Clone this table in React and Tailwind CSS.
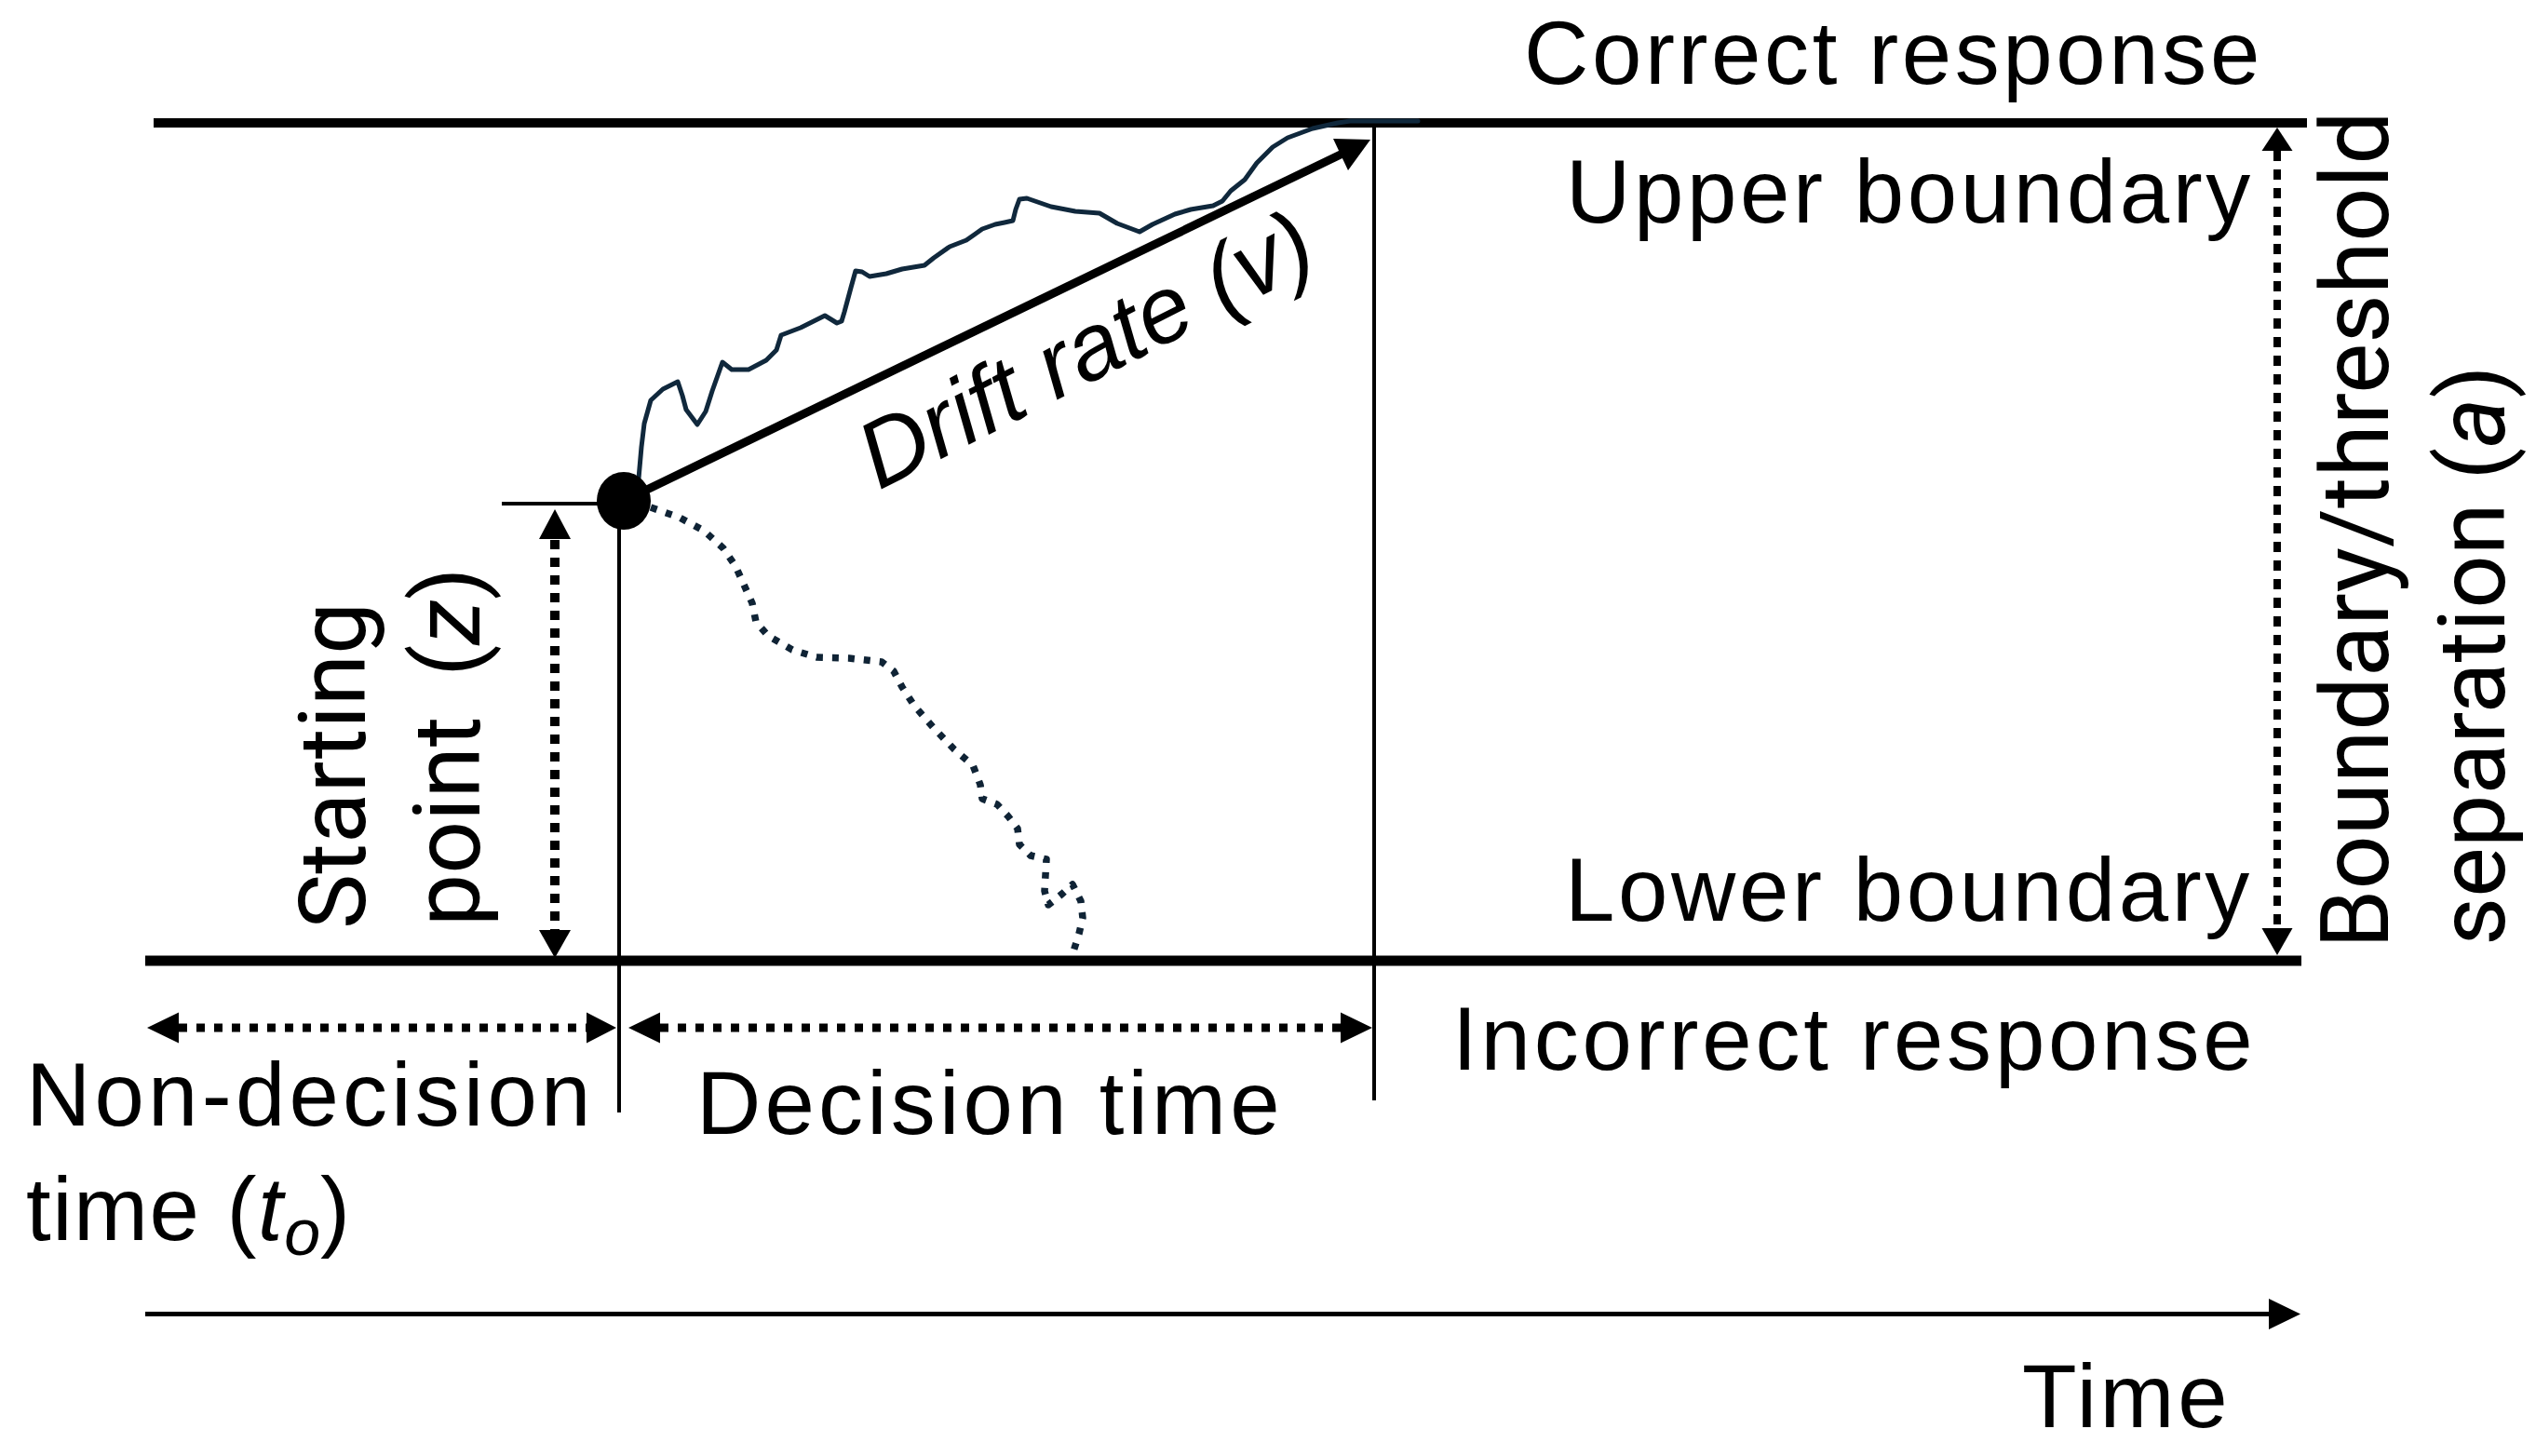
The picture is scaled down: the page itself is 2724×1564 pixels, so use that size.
import React from "react";

const noisy = [
  [686, 514], [689, 480], [692, 455], [699, 430], [712, 418], [728, 410], [733, 425], [737, 440],
  [749, 456], [758, 442], [765, 420], [776, 389], [786, 397], [804, 397], [823, 387], [834, 376],
  [839, 360], [860, 352], [886, 339], [899, 347], [904, 345], [907, 335], [914, 309], [919, 291],
  [926, 292], [934, 297], [952, 294], [969, 289], [993, 285], [1003, 277], [1020, 265], [1038, 258],
  [1048, 251], [1055, 246], [1069, 241], [1079, 239], [1088, 237], [1091, 225], [1095, 214],
  [1103, 213], [1129, 222], [1155, 227], [1181, 229], [1200, 240], [1224, 249], [1238, 241],
  [1262, 230], [1279, 225], [1303, 221], [1313, 216], [1322, 205], [1337, 193], [1350, 175],
  [1367, 158], [1383, 148], [1410, 138], [1437, 132], [1450, 130], [1523, 130],
];

const dotted = [
  [699, 545], [730, 556], [756, 570], [777, 589], [790, 608], [799, 628], [808, 648], [812, 668],
  [825, 683], [851, 698], [877, 706], [912, 707], [947, 711], [960, 721], [969, 738], [982, 758],
  [1003, 782], [1025, 805], [1045, 822], [1053, 843], [1055, 858], [1071, 864], [1083, 877],
  [1093, 890], [1095, 907], [1107, 919], [1124, 923], [1123, 940], [1122, 957], [1126, 972],
  [1141, 960], [1152, 950], [1161, 968], [1163, 986], [1159, 1003], [1153, 1022],
];

const toPath = (pts) => pts.map((p, i) => `${i ? "L" : "M"}${p[0]} ${p[1]}`).join(" ");

function Diagram() {
  return (
    <svg
      className="absolute inset-0"
      width="2724"
      height="1564"
      viewBox="0 0 2724 1564"
      xmlns="http://www.w3.org/2000/svg"
    >
      {/* boundaries */}
      <line x1="165" y1="132" x2="2478" y2="132" stroke="#000" strokeWidth="10" />
      <line x1="156" y1="1032" x2="2472" y2="1032" stroke="#000" strokeWidth="11" />

      {/* time axis */}
      <line x1="156" y1="1411.5" x2="2440" y2="1411.5" stroke="#000" strokeWidth="5" />
      <polygon points="2471,1411.5 2437,1395 2437,1428" fill="#000" />

      {/* vertical markers */}
      <line x1="665" y1="540" x2="665" y2="1195" stroke="#000" strokeWidth="4" />
      <line x1="1476" y1="132" x2="1476" y2="1182" stroke="#000" strokeWidth="4" />
      <line x1="539" y1="541" x2="660" y2="541" stroke="#000" strokeWidth="4" />

      {/* starting point dotted arrow */}
      <line x1="596" y1="580" x2="596" y2="1000" stroke="#000" strokeWidth="10" strokeDasharray="10 9" />
      <polygon points="596,547 579,579 613,579" fill="#000" />
      <polygon points="596,1029 579,999 613,999" fill="#000" />

      {/* boundary separation dotted arrow */}
      <line x1="2446" y1="162" x2="2446" y2="997" stroke="#000" strokeWidth="8" strokeDasharray="11 9" />
      <polygon points="2446,137 2429.5,162 2462.5,162" fill="#000" />
      <polygon points="2446,1026 2429.5,997 2462.5,997" fill="#000" />

      {/* non-decision / decision dotted arrows */}
      <line x1="192" y1="1104" x2="631" y2="1104" stroke="#000" strokeWidth="9" strokeDasharray="9 10" />
      <polygon points="158,1104 192,1087.5 192,1120.5" fill="#000" />
      <polygon points="662,1104 630,1087.5 630,1120.5" fill="#000" />
      <line x1="709" y1="1104" x2="1440" y2="1104" stroke="#000" strokeWidth="9" strokeDasharray="9 10" />
      <polygon points="675,1104 709,1087.5 709,1120.5" fill="#000" />
      <polygon points="1474,1104 1440,1087.5 1440,1120.5" fill="#000" />

      {/* drift arrow */}
      <line x1="670" y1="538" x2="1442" y2="165" stroke="#000" strokeWidth="9" />
      <polygon points="1472,150 1432,149 1448,183" fill="#000" />

      {/* sample paths */}
      <path d={toPath(noisy)} fill="none" stroke="#10283c" strokeWidth="5" strokeLinejoin="round" strokeLinecap="round" />
      <path d={toPath(dotted)} fill="none" stroke="#0f2335" strokeWidth="7.5" strokeDasharray="7 10" strokeLinejoin="round" />

      {/* starting point */}
      <ellipse cx="670" cy="538" rx="29" ry="31" fill="#000" />
    </svg>
  );
}

const sans = "font-['Liberation_Sans',Arial,sans-serif]";
const rob = "font-['Roboto','Liberation_Sans',sans-serif]";

export default function App() {
  return (
    <div className="relative w-[2724px] h-[1564px] bg-white overflow-hidden text-black">
      <Diagram />

      {/* horizontal labels */}
      <div className={`${sans} absolute left-[1637px] top-[9px] text-[96px] leading-none tracking-[3.6px] whitespace-nowrap`}>
        Correct response
      </div>
      <div className={`${sans} absolute left-[1682px] top-[158px] text-[96px] leading-none tracking-[3.6px] whitespace-nowrap`}>
        Upper boundary
      </div>
      <div className={`${sans} absolute left-[1681px] top-[908px] text-[96px] leading-none tracking-[3.6px] whitespace-nowrap`}>
        Lower boundary
      </div>
      <div className={`${sans} absolute left-[1560px] top-[1068px] text-[96px] leading-none tracking-[3.8px] whitespace-nowrap`}>
        Incorrect response
      </div>
      <div className={`${sans} absolute left-[2172px] top-[1452px] text-[96px] leading-none tracking-[3.6px] whitespace-nowrap`}>
        Time
      </div>
      <div className={`${sans} absolute left-[748px] top-[1137px] text-[96px] leading-none tracking-[4.2px] whitespace-nowrap`}>
        Decision time
      </div>
      <div className={`${sans} absolute left-[28px] top-[1127px] text-[96px] leading-[123px] whitespace-nowrap`}>
        <div className="h-[123px] -mt-[13px] tracking-[4.2px]">Non-decision</div>
        <div className="h-[123px] tracking-[1.5px]">
          time (<i>t</i>
          <span className="relative top-[16px] text-[70px] italic tracking-normal">o</span>)
        </div>
      </div>

      {/* drift rate label */}
      <div
        className={`${sans} absolute left-[944px] top-[442px] text-[101px] leading-none italic whitespace-nowrap origin-[0px_85px] -rotate-[27deg]`}
      >
        Drift rate (v)
      </div>

      {/* vertical labels */}
      <div className={`${rob} absolute left-[308px] top-[998px] text-[100px] leading-none whitespace-nowrap origin-top-left -rotate-90`}>
        Starting
      </div>
      <div className={`${rob} absolute left-[431px] top-[995px] text-[100px] leading-none whitespace-nowrap origin-top-left -rotate-90`}>
        point <span className="ml-[18px]">(</span><i>z</i>)
      </div>
      <div className={`${rob} absolute left-[2479px] top-[1019px] text-[102px] leading-none whitespace-nowrap origin-top-left -rotate-90`}>
        Boundary/threshold
      </div>
      <div className={`${rob} absolute left-[2605px] top-[1016px] text-[101px] leading-none whitespace-nowrap origin-top-left -rotate-90`}>
        separation (<i>a</i>)
      </div>
    </div>
  );
}
